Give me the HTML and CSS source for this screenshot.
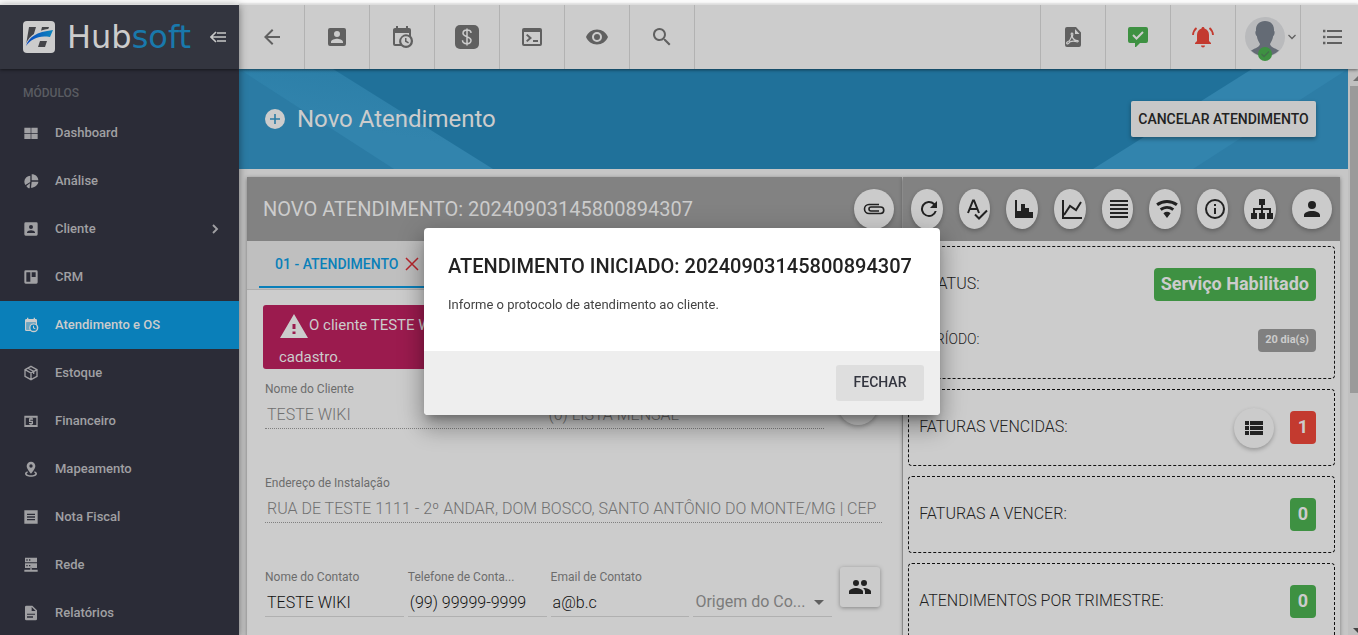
FILE: index.html
```html
<!DOCTYPE html>
<html lang="pt-BR">
<head>
<meta charset="utf-8">
<title>Hubsoft - Novo Atendimento</title>
<link rel="stylesheet" href="styles.css">
</head>
<body>
<div class="app">
  <aside class="sidebar">
    <div class="brand">
      <svg class="brand-mark" viewBox="0 0 32 32" aria-hidden="true"><defs><linearGradient id="bm"><stop stop-color="#0a47c0"/><stop offset="1" stop-color="#0c86bd"/></linearGradient></defs><rect width="32" height="32" rx="4" fill="#ccc"/><path d="M6 6h7l-3 10-7 8zM19 6h7l-2 6-7 2zM17 20h7l-2 6h-7z" fill="#434448"/><path d="M2 26C5 15 13 9 31 7l-3 11c-9-2-15 0-19 3-3 2-5 3-7 5z" fill="#ccc"/><path d="M3 25C6 16 13 11 30 9l-3 7c-8-1-12 0-16 2-4 2-6 4-8 7z" fill="url(#bm)"/></svg>
      <span class="brand-name">Hub<span class="brand-accent">soft</span></span>
      <button class="icon-btn fold" aria-label="Recolher menu"><svg viewBox="0 0 16 12" width="16" height="12" fill="none" stroke="#c8c8c8" stroke-width="1.6"><path d="M7 2h9M2 6h14M7 10h9M6 1L1 6l5 5"/></svg></button>
    </div>
    <h2 class="side-title">MÓDULOS</h2>
    <nav class="menu">
      <a href="#"><svg viewBox="0 0 24 24"><path d="M2 4h9.500v8H2zM12.500 4H22v8h-9.500zM2 13h9.500v8H2zM12.500 13H22v8h-9.500z"/></svg>Dashboard</a>
      <a href="#"><svg viewBox="0 0 24 24"><path d="M13 2v9h10c0-5-4-9-10-9zM11 4a9 9 0 0 0-9 9c0 2 .6 3.600 1.500 5L11 13.500zM23 13H13l-1 9c5 0 11-4 11-9zM10.500 15.500L5 19.500C6.500 22 8 23 10 23z"/></svg>Análise</a>
      <a href="#"><svg viewBox="0 0 24 24"><path fill-rule="evenodd" d="M4 2h16a2 2 0 0 1 2 2v16a2 2 0 0 1-2 2H4a2 2 0 0 1-2-2V4a2 2 0 0 1 2-2zm8 4a3 3 0 1 0 0 6 3 3 0 0 0 0-6zM6 18h12v-1c0-2-4-3.200-6-3.200S6 15 6 17z"/></svg>Cliente<svg class="chevron" viewBox="0 0 24 24"><path d="M8 17L13 12 8 7l2-2 7 7-7 7z"/></svg></a>
      <a href="#"><svg viewBox="0 0 24 24"><path fill-rule="evenodd" d="M4 2h16a2 2 0 0 1 2 2v16a2 2 0 0 1-2 2H4a2 2 0 0 1-2-2V4a2 2 0 0 1 2-2zm1 3v14h6V5zm8 0v7h6V5z"/></svg>CRM</a>
      <a href="#" class="active"><svg viewBox="0 0 24 24"><path fill-rule="evenodd" d="M15 13h1.500v2.800l2.400 1.400-.7 1.300-3.200-1.800zM19 8H5v11h4.700a7 7 0 0 1 9.300-9zM5 21a2 2 0 0 1-2-2V5c0-1.100.9-2 2-2h1V1h2v2h8V1h2v2h1a2 2 0 0 1 2 2v6.100A7 7 0 1 1 11.100 21zm11-9.800a4.800 4.800 0 1 0 0 9.600 4.800 4.800 0 0 0 0-9.600z"/><path d="M5 8h14v2h-5l-4 4-1 5H5z" opacity=".5"/></svg>Atendimento e OS</a>
      <a href="#"><svg viewBox="0 0 24 24" class="line"><path d="M12 2l9 5v10l-9 5-9-5V7zM3 7l9 5 9-5M12 12v10M7 4.500l9 5v4"/></svg>Estoque</a>
      <a href="#"><svg viewBox="0 0 24 24"><path fill-rule="evenodd" d="M2 4h20v17H2zm2 3v11h16V7zm7 0h2v1h2v2h-4v1.500h4V17h-2v1h-2v-1H9v-2h4v-1.500H9V8h2z"/></svg>Financeiro</a>
      <a href="#"><svg viewBox="0 0 24 24"><path fill-rule="evenodd" d="M12 1a6.500 6.500 0 0 1 6.500 6.500C18.500 12 12 19 12 19S5.500 12 5.500 7.500A6.500 6.500 0 0 1 12 1zm0 4a2.500 2.500 0 1 0 0 5 2.500 2.500 0 0 0 0-5zM21 19c0 2.500-4 4.500-9 4.500S3 21.500 3 19c0-1.500 1.500-3 3.500-3.700l1 1.500C6.300 17.500 5.500 18.200 5.500 19c0 1.300 3 2.300 6.500 2.300s6.500-1 6.500-2.300c0-.8-.8-1.500-2-2.100l1-1.600C19.500 16 21 17.500 21 19z"/></svg>Mapeamento</a>
      <a href="#"><svg viewBox="0 0 24 24"><path fill-rule="evenodd" d="M2 2h20v20H2zm4 5v2h12V7zm0 4v2h12v-2zm0 4v2h12v-2z"/></svg>Nota Fiscal</a>
      <a href="#"><svg viewBox="0 0 24 24"><path fill-rule="evenodd" d="M3 1h18v7H3zm2 2.500v2h2v-2zm4 0v2h2v-2zM3 9.500h18v7H3zM5 12v2h2v-2zm4 0v2h2v-2zM11 16h2v3h9v3H2v-3h9z"/></svg>Rede</a>
      <a href="#"><svg viewBox="0 0 24 24"><path fill-rule="evenodd" d="M5 1h9l7 7v13a2 2 0 0 1-2 2H5a2 2 0 0 1-2-2V3a2 2 0 0 1 2-2zm8 2v6h6zM6 13v1.800h12V13zm0 4v2h9v-2z"/></svg>Relatórios</a>
    </nav>
  </aside>

  <div class="page">
    <header class="toolbar">
      <button class="first" aria-label="Voltar"><svg viewBox="0 0 24 24"><path d="M20 11H7.800l5.600-5.600L12 4l-8 8 8 8 1.400-1.400L7.800 13H20z"/></svg></button>
      <button aria-label="Clientes"><svg viewBox="0 0 24 24"><path fill-rule="evenodd" d="M5 3h14a2 2 0 0 1 2 2v14a2 2 0 0 1-2 2H5a2 2 0 0 1-2-2V5a2 2 0 0 1 2-2zm7 3a3 3 0 1 0 0 6 3 3 0 0 0 0-6zM6 18h12v-1c0-2-4-3.200-6-3.200S6 15 6 17z"/></svg></button>
      <button aria-label="Agenda"><svg viewBox="0 0 24 24"><path d="M15 13h1.500v2.800l2.400 1.400-.7 1.300-3.200-1.800zM19 8H5v11h4.700a7 7 0 0 1 9.300-9zM5 21a2 2 0 0 1-2-2V5c0-1.100.9-2 2-2h1V1h2v2h8V1h2v2h1a2 2 0 0 1 2 2v6.100A7 7 0 1 1 11.100 21zm11-9.800a4.800 4.800 0 1 0 0 9.600 4.800 4.800 0 0 0 0-9.600z" fill-rule="evenodd"/></svg></button>
      <button aria-label="Financeiro"><svg viewBox="0 0 24 24"><rect width="24" height="24" rx="5"/><path d="M16 8c0-2-2-3-4-3S8 6 8 8.300c0 4 8 2.900 8 7 0 2.400-2 3.400-4 3.400s-4.500-1-4.500-3.400M12 3.500v17" fill="none" stroke="#ccc" stroke-width="1.500"/></svg></button>
      <button aria-label="Terminal"><svg viewBox="0 0 24 24"><path fill-rule="evenodd" d="M4 3h16a2 2 0 0 1 2 2v14a2 2 0 0 1-2 2H4a2 2 0 0 1-2-2V5a2 2 0 0 1 2-2zm0 4v12h16V7zm3.400 2L12 13l-4.600 4L6 15.800 9 13 6 10.200zM13 15h5v2h-5z"/></svg></button>
      <button aria-label="Visualizar"><svg viewBox="0 0 24 24"><path fill-rule="evenodd" d="M12 4.500C7 4.500 2.700 7.600 1 12c1.700 4.400 6 7.500 11 7.500s9.300-3.100 11-7.500c-1.700-4.400-6-7.500-11-7.500zM12 17a5 5 0 1 1 0-10 5 5 0 0 1 0 10zm0-8a3 3 0 1 0 0 6 3 3 0 0 0 0-6z"/></svg></button>
      <button aria-label="Pesquisar"><svg viewBox="0 0 24 24"><path d="M15.500 14h-.8l-.3-.3A6.500 6.500 0 1 0 13.700 14.400l.3.300v.8l5 5 1.500-1.500zm-6 0a4.500 4.500 0 1 1 0-9 4.500 4.500 0 0 1 0 9z"/></svg></button>
      <span class="spacer"></span>
      <button aria-label="PDF"><svg viewBox="0 0 24 24"><path fill-rule="evenodd" d="M6 2h9l5 5.500V20a2 2 0 0 1-2 2H6a2 2 0 0 1-2-2V4a2 2 0 0 1 2-2zm8 2v5h4.500z"/><path d="M11 8c1.500 0 .5 3 .3 4 1 2.500 3 3.500 5.200 3.500 1.500.5.500 1.800-.8 1.300-2-1-4.500-1-7 .2-1 1.700-2.500 2.500-3 1.500s1-2 2.800-2.700c1-1.700 1.800-3.300 2.200-5C10 9.500 10 8 11 8z" fill="none" stroke="#ccc" stroke-width="1.200"/></svg></button>
      <button aria-label="Mensagens"><svg class="green" viewBox="0 0 24 24"><path d="M4 2h16a2 2 0 0 1 2 2v12a2 2 0 0 1-2 2h-6l-4 4H9v-4H4a2 2 0 0 1-2-2V4a2 2 0 0 1 2-2z"/><path d="M7 10l3.500 3.500L17 7" fill="none" stroke="#ccc" stroke-width="2"/></svg></button>
      <button aria-label="Notificações"><svg class="red" viewBox="0 0 24 24"><path d="M12 2c1 0 1.500.7 1.500 1.600C16.500 4.500 18 7 18 10v6l2 2v1H4v-1l2-2v-6c0-3 1.500-5.500 4.500-6.400C10.500 2.700 11 2 12 2zM10 20.500h4a2 2 0 0 1-4 0z"/><path d="M5.500 3A10 10 0 0 0 2 10M18.500 3A10 10 0 0 1 22 10" fill="none" stroke="#c33a2f" stroke-width="1.800"/></svg></button>
      <button class="user" aria-label="Usuário"><svg class="avatar" viewBox="0 0 40 44"><circle cx="20" cy="20" r="20" fill="#b9babc"/><path d="M20 4c6 0 9.500 4 9 10 1 0 .8 4-.8 5-.6 4-2.200 6-3.200 8 .5 3 4.500 4 9 6.500a20 20 0 0 1-28 0c4.500-2.500 8.500-3.500 9-6.500-1-2-2.600-4-3.200-8-1.600-1-1.800-5-.8-5-.5-6 3-10 9-10z" fill="#646b75"/><circle cx="20" cy="37" r="7" fill="#3e9142"/><path d="M16.500 37l2.500 2.500 5-5" fill="none" stroke="#44704c" stroke-width="1.300"/></svg><svg class="caret" viewBox="0 0 8 6"><path d="M.5 1L4 4.500 7.500 1" fill="none" stroke="#606060" stroke-width="1.300"/></svg></button>
      <button class="last" aria-label="Lista"><svg viewBox="0 0 24 24"><path d="M7 5h15v2H7zM7 11h15v2H7zM7 17h15v2H7zM3 4.800h2.400v2.400H3zM3 10.800h2.400v2.400H3zM3 16.800h2.400v2.400H3z"/></svg></button>
    </header>

    <div class="scroller">
      <main class="content">
        <section class="hero">
          <svg class="hero-art left" viewBox="0 0 260 100" preserveAspectRatio="none" aria-hidden="true"><defs><linearGradient id="ha" x1="0" y1="1" x2=".4" y2="0"><stop offset=".5" stop-color="#3284ad"/><stop offset="1" stop-color="#2c7fa8"/></linearGradient></defs><path d="M0 0h94l160 100H0z" fill="url(#ha)"/><path d="M0 0l155 100H0z" fill="#2b7ba4"/></svg>
          <svg class="hero-art right" viewBox="0 0 260 100" preserveAspectRatio="none" aria-hidden="true"><path d="M260 0h-96L5 100h255z" fill="#3284ad"/><path d="M260 0L105 100h155z" fill="#2d7da6"/></svg>
          <svg class="plus" viewBox="0 0 20 20" aria-hidden="true"><circle cx="10" cy="10" r="10" fill="#ccc"/><path d="M10 5v10M5 10h10" stroke="#2b7ba4" stroke-width="1.600"/></svg>
          <h1>Novo Atendimento</h1>
          <button class="cancel">CANCELAR ATENDIMENTO</button>
        </section>

        <div class="columns">
          <section class="card form-card">
            <header class="card-head">
              <h2>NOVO ATENDIMENTO: 20240903145800894307</h2>
              <button class="round" aria-label="Anexos"><svg viewBox="0 0 24 24"><path d="M17 7.500H7a4.500 4.500 0 0 0 0 9h11.500a3.200 3.200 0 0 0 0-6.500H9a2 2 0 0 0 0 4h8" fill="none" stroke="#222" stroke-width="1.600"/></svg></button>
            </header>
            <div class="tabs">
              <button class="tab">01 - ATENDIMENTO <svg viewBox="0 0 14 14"><path d="M1 1l12 12M13 1L1 13" stroke="#b8262c" stroke-width="1.500"/></svg></button>
            </div>
            <div class="form">
              <p class="alert"><svg viewBox="0 0 28 24"><path fill-rule="evenodd" d="M14 0l14 24H0zM12.500 10v5h3v-5zm0 7.500v2.500h3v-2.500z" fill="#ccc"/></svg>O cliente TESTE WIKI possui pendências no seu<br>cadastro.</p>
              <div class="row">
                <div class="field off"><label for="nome">Nome do Cliente</label><input id="nome" value="TESTE WIKI" disabled></div>
                <div class="field off"><label for="lista">Grupo</label><input id="lista" value="(0) LISTA MENSAL" disabled></div>
                <button class="round row-round" aria-label="Ver"></button>
              </div>
              <div class="row">
                <div class="field off"><label for="end">Endereço de Instalação</label><input id="end" value="RUA DE TESTE 1111 - 2º ANDAR, DOM BOSCO, SANTO ANTÔNIO DO MONTE/MG | CEP" disabled></div>
              </div>
              <div class="row">
                <div class="field"><label for="cont">Nome do Contato</label><input id="cont" value="TESTE WIKI"></div>
                <div class="field"><label for="tel">Telefone de Conta...</label><input id="tel" value="(99) 99999-9999"></div>
                <div class="field"><label for="mail">Email de Contato</label><input id="mail" value="a@b.c"></div>
                <div class="field pick"><select aria-label="Origem do Contato"><option>Origem do Co...</option></select></div>
                <button class="square" aria-label="Contatos"><svg viewBox="0 0 24 24"><path d="M16 11a3 3 0 1 0 0-6 3 3 0 0 0 0 6zM8 11a3 3 0 1 0 0-6 3 3 0 0 0 0 6zM8 13c-2.300 0-7 1.200-7 3.500V19h14v-2.500C15 14.200 10.300 13 8 13zM16 13h-1c1.200.8 2 2 2 3.500V19h6v-2.500c0-2.300-4.700-3.500-7-3.500z"/></svg></button>
              </div>
            </div>
          </section>

          <section class="card info-card">
            <header class="card-head actions">
              <button class="round" aria-label="Atualizar"><svg viewBox="0 0 24 24"><path d="M17.700 6.300A8 8 0 1 0 19.700 14h-2A6 6 0 1 1 16.200 7.800L13 11h7V4z"/></svg></button>
              <button class="round" aria-label="Ortografia"><svg viewBox="0 0 24 24"><path d="M3 16L8 3.500h1L14 16M4.700 12h7.600M10 17.500l4 4 8-8" fill="none" stroke="#222" stroke-width="2"/></svg></button>
              <button class="round" aria-label="Consumo"><svg viewBox="0 0 24 24"><path d="M3 3h2v11h4V7h4v4h4v4h4v6H3z"/></svg></button>
              <button class="round" aria-label="Gráfico"><svg viewBox="0 0 24 24"><path d="M3 3v18h19M4 18l6-9 6 4 5-8" fill="none" stroke="#222" stroke-width="2"/></svg></button>
              <button class="round" aria-label="Registros"><svg viewBox="0 0 24 24"><path d="M3 3h18v2H3zM3 7h18v2H3zM3 11h18v2H3zM3 15h18v2H3zM3 19h18v2H3z"/></svg></button>
              <button class="round" aria-label="Wi-Fi"><svg viewBox="0 0 24 24"><path d="M12 21l3.600-4.800a6 6 0 0 0-7.200 0zM12 3C8 3 4.200 4.300 1.200 6.600L3 9a15 15 0 0 1 18 0l1.800-2.400A18 18 0 0 0 12 3zm0 6c-2.700 0-5.200.9-7.200 2.400l1.800 2.400a9 9 0 0 1 10.800 0l1.800-2.400A12 12 0 0 0 12 9z"/></svg></button>
              <button class="round" aria-label="Informações"><svg viewBox="0 0 24 24"><path fill-rule="evenodd" d="M12 2a10 10 0 1 1 0 20 10 10 0 0 1 0-20zm0 2a8 8 0 1 0 0 16 8 8 0 0 0 0-16zM11 7h2v2h-2zM11 11h2v6h-2z"/></svg></button>
              <button class="round" aria-label="Rede"><svg viewBox="0 0 24 24"><path d="M9 2h6v6h-2v3h8v5h2v6h-6v-6h2v-3h-6v3h2v6H9v-6h2v-3H5v3h2v6H1v-6h2v-5h8V8H9z"/></svg></button>
              <button class="round full" aria-label="Perfil"><svg viewBox="0 0 24 24"><path d="M12 4a4 4 0 1 1 0 8 4 4 0 0 1 0-8zM12 14c4.400 0 8 1.800 8 4v2H4v-2c0-2.200 3.600-4 8-4z"/></svg></button>
            </header>
            <div class="boxes">
              <div class="box tall">
                <div class="stat"><span>STATUS:</span><b class="badge ok">Serviço Habilitado</b></div>
                <div class="stat small"><span>PERÍODO:</span><b class="badge grey">20 dia(s)</b></div>
              </div>
              <div class="box"><div class="stat"><span>FATURAS VENCIDAS:</span><button class="round full" aria-label="Ver faturas"><svg viewBox="0 0 24 24"><path d="M3 5h4v4H3zM8 5h13v4H8zM3 10h4v4H3zM8 10h13v4H8zM3 15h4v4H3zM8 15h13v4H8z"/></svg></button><b class="badge bad">1</b></div></div>
              <div class="box"><div class="stat"><span>FATURAS A VENCER:</span><b class="badge ok">0</b></div></div>
              <div class="box"><div class="stat"><span>ATENDIMENTOS POR TRIMESTRE:</span><b class="badge ok">0</b></div></div>
            </div>
          </section>
        </div>
      </main>
      <div class="scrollbar" aria-hidden="true"><i class="up"></i><i class="thumb"></i><i class="down"></i></div>
    </div>
  </div>
</div>

<div class="overlay">
  <div class="dialog" role="dialog" aria-labelledby="dlg-title">
    <div class="dialog-body">
      <h2 id="dlg-title">ATENDIMENTO INICIADO: 20240903145800894307</h2>
      <p>Informe o protocolo de atendimento ao cliente.</p>
    </div>
    <div class="dialog-actions"><button>FECHAR</button></div>
  </div>
</div>
</body>
</html>
```
FILE: styles.css
```css
* { box-sizing: border-box; }
body { margin: 0; font-family: Roboto, "Liberation Sans", sans-serif; color: #222; background: #fafafa; }
button { border: 0; padding: 0; margin: 0; font: inherit; color: inherit; background: none; cursor: pointer; }
h1, h2, p { margin: 0; font-weight: 400; }
svg { display: block; flex: none; }

.app { display: flex; height: 100vh; padding-top: 4px; overflow: hidden; }

/* Sidebar */
.sidebar { width: 239px; flex: none; background: #2b2c37; border-top: 1px solid #ddd; box-shadow: 0 2px 8px rgba(0,0,0,.45); position: relative; z-index: 2; overflow: hidden; }
.brand { display: flex; align-items: center; height: 64px; padding: 0 13px 0 23px; background: #33353f; box-shadow: 0 1px 3px rgba(0,0,0,.5); }
.brand-mark { width: 32px; height: 32px; }
.brand-name { flex: 1; margin-left: 12px; font: 400 32px/40px "DejaVu Sans", sans-serif; color: #ccc; }
.brand-accent { color: #1979ac; }
.side-title { padding-left: 23px; margin-top: 12px; font-size: 12px; line-height: 24px; font-weight: 500; color: #5a5c62; }
.menu { margin-top: 4px; }
.menu a { display: flex; align-items: center; height: 48px; padding: 0 16px 0 23px; font-size: 13px; font-weight: 500; line-height: 20px; color: #a0a0a3; text-decoration: none; }
.menu svg { width: 16px; height: 16px; margin-right: 16px; fill: #a0a0a3; }
.menu .line { fill: none; stroke: #a0a0a3; stroke-width: 2; }
.menu .chevron { margin: 0 0 0 auto; }
.menu .active { background: #0a7fb9; color: #ccc; }
.menu .active svg { fill: #ccc; }

/* Toolbar */
.page { flex: 1; min-width: 0; display: flex; flex-direction: column; }
.toolbar { display: flex; flex: none; height: 65px; background: #ccc; border-top: 1px solid #ddd; box-shadow: 0 1px 3px rgba(0,0,0,.5); position: relative; z-index: 1; }
.toolbar button { width: 65px; flex: none; display: flex; align-items: center; justify-content: center; border-right: 1px solid #b2b2b2; }
.toolbar .first { width: 66px; }
.toolbar svg { width: 24px; height: 24px; fill: #606060; }
.spacer { flex: 1; border-right: 1px solid #b2b2b2; }
.toolbar .green { fill: #3e9142; }
.toolbar .red { fill: #c33a2f; }
.toolbar .user { padding-left: 4px; }
.toolbar .avatar { width: 40px; height: 44px; margin-top: 4px; }
.toolbar .caret { width: 8px; height: 6px; margin-left: 3px; }
.toolbar .last { width: 57px; border: 0; justify-content: flex-start; padding-left: 19px; }

/* Content */
.scroller { flex: 1; min-height: 0; display: flex; background: #c6c6c6; }
.content { flex: 1; min-width: 0; overflow: hidden; }
.hero { position: relative; display: flex; align-items: center; height: 100px; padding: 0 32px 0 26px; background: #20719a; }
.hero-art { position: absolute; top: 0; width: 260px; height: 100px; }
.left { left: 0; }
.right { right: 0; }
.plus { position: relative; width: 20px; height: 20px; }
.hero h1 { position: relative; flex: 1; margin-left: 12px; font-size: 24px; line-height: 32px; color: #ccc; }
.cancel { position: relative; min-width: 185px; height: 36px; padding: 0 6px; border-radius: 2px; background: #c8c8c8; font-size: 14px; font-weight: 500; box-shadow: 0 2px 4px rgba(0,0,0,.35); }
.columns { display: grid; grid-template-columns: 3fr 2fr; gap: 1px; padding: 8px; }
.card { background: #ccc; box-shadow: 0 1px 4px rgba(0,0,0,.4); min-width: 0; height: 560px; }
.card-head { display: flex; align-items: center; height: 64px; padding: 0 8px 0 16px; background: #828282; }
.card-head h2 { flex: 1; font-size: 20px; line-height: 24px; color: #ccc; }
.round { width: 40px; height: 40px; flex: none; display: flex; align-items: center; justify-content: center; border-radius: 50%; background: #cbcbcb; box-shadow: 0 2px 4px rgba(0,0,0,.26); }
.round svg { width: 24px; height: 24px; fill: #222; }
.actions { gap: 16px; padding: 0 8px; }
.actions .round { flex: 1; min-width: 0; padding-left: 4px; }
.actions .round.full { flex: none; padding: 0; }

.tabs { height: 49px; padding-left: 12px; background: #bfbfbf; border-bottom: 1px solid #adadad; }
.tab { display: flex; align-items: center; gap: 7px; width: 176px; height: 47px; padding: 0 16px; border-bottom: 2px solid #0a7fb9; color: #0a7fb9; font-size: 14px; font-weight: 500; white-space: nowrap; }
.tab svg { width: 14px; height: 14px; }
.form { padding: 15px 16px; }
.alert { height: 64px; padding: 4px 16px; border-radius: 3px; background: #9b1b4e; color: #ccc; font-size: 15px; line-height: 32px; overflow: hidden; }
.alert svg { display: inline-block; width: 30px; height: 24px; vertical-align: middle; }
.row { display: flex; gap: 4px; height: 94px; padding: 10px 4px 0 2px; }
.field { flex: 1; min-width: 0; }
.field label { display: block; height: 19px; font-size: 12px; line-height: 20px; color: #6c6c6c; white-space: nowrap; }
.field input, .field select { display: block; width: 100%; height: 31px; padding: 2px 2px 0; border: 0; border-bottom: 1px solid #b0b0b0; border-radius: 0; background: none; font: 300 16px/24px Roboto, sans-serif; color: #111; outline: 0; }
.off input { border-bottom: 1px dotted #808080; color: #707070; }
.pick { position: relative; padding-top: 19px; }
.pick select { appearance: none; color: #7b7b7b; font-weight: 400; }
.pick::after { content: ""; position: absolute; right: 8px; top: 33px; border: 5px solid transparent; border-top-color: #606060; border-bottom: 0; }
.row-round { margin: 6px 4px 0 10px; }
.square { width: 40px; height: 40px; flex: none; margin: 0 2px 0 4px; display: flex; align-items: center; justify-content: center; border-radius: 3px; background: #cbcbcb; box-shadow: 0 1px 4px rgba(0,0,0,.35); }
.square svg { width: 24px; height: 24px; fill: #222; }

.boxes { display: flex; flex-direction: column; gap: 10px; padding: 5px; }
.box { height: 77px; flex: none; padding: 0 18px 0 10px; border: 1px dashed #111; border-radius: 4px; display: flex; flex-direction: column; justify-content: center; }
.tall { height: 133px; gap: 23px; }
.stat { display: flex; align-items: center; gap: 16px; font-size: 16px; font-weight: 300; line-height: 31px; }
.stat span { flex: 1; padding-bottom: 2px; }
.small { font-size: 14px; }
.badge { min-width: 26px; padding: 0 7px 2px; border-radius: 4px; font-size: 18px; font-weight: 700; line-height: 31px; text-align: center; color: #ccc; }
.ok { background: #3e9142; }
.bad { background: #c33a2f; }
.grey { background: #808080; font-size: 11px; line-height: 21px; }

.scrollbar { width: 10px; flex: none; display: flex; flex-direction: column; padding-left: 2px; background: #c0c0c0; overflow: hidden; }
.up { margin: 7px 0 5px 3px; border: 5px solid transparent; border-top: 0; border-bottom-color: #707070; width: 0; height: 5px; }
.thumb { height: 307px; background: #9a9a9a; }
.down { margin: auto 0 2px 3px; border: 5px solid transparent; border-bottom: 0; border-top-color: #444; width: 0; height: 5px; }

/* Dialog */
.overlay { position: fixed; inset: 5px 0 0; z-index: 10; display: flex; align-items: center; justify-content: center; padding: 3px 0 0 6px; }
.dialog { min-width: 516px; background: #fff; border-radius: 4px; overflow: hidden; box-shadow: 0 7px 9px -4px rgba(0,0,0,.3), 0 14px 22px 2px rgba(0,0,0,.2), 0 5px 26px 4px rgba(0,0,0,.15); }
.dialog-body { padding: 24px 24px 36px; }
.dialog h2 { font-size: 20px; font-weight: 500; line-height: 28px; }
.dialog p { margin-top: 15px; font-size: 13px; line-height: 20px; color: #444; }
.dialog-actions { display: flex; justify-content: flex-end; padding: 14px 16px; background: #eee; }
.dialog-actions button { width: 88px; height: 36px; padding-bottom: 2px; border-radius: 3px; background: #dedede; color: #33353f; font-size: 14px; font-weight: 500; }
```
